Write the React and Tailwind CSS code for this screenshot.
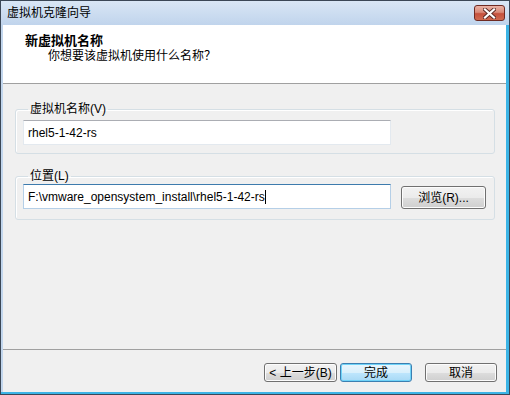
import React from "react";

const font = { fontFamily: '"Liberation Sans", "Noto Sans CJK SC", sans-serif' };

const WinButton = ({ children, primary, className = "" }) => (
  <button
    className={
      "flex items-center justify-center rounded-[3px] border text-[12px] leading-none text-black " +
      (primary
        ? "border-[#3c7fb1] bg-[linear-gradient(#eaf6fd_0%,#d9f0fc_50%,#bee6fd_51%,#a7d9f5_100%)] shadow-[inset_0_0_0_1px_#6fd3f8] "
        : "border-[#707070] bg-[linear-gradient(#f2f2f2_0%,#ebebeb_50%,#dddddd_51%,#cfcfcf_100%)] shadow-[inset_0_0_0_1px_#fcfcfc] ") +
      className
    }
  >
    {children}
  </button>
);

const App = () => {
  return (
    <div
      className="w-[510px] h-[395px] flex flex-col bg-[#c2d6ed] border border-[#3b4756] shadow-[inset_-3px_-2px_0_#3cb4e6]"
      style={font}
    >
      {/* Title bar */}
      <div className="h-[24px] flex items-start justify-between bg-gradient-to-b from-[#d9e6f5] to-[#c0d4ec]">
        <span className="pl-[6px] pt-[4px] text-[12px] leading-[16px] text-black">虚拟机克隆向导</span>
        <div className="mt-[4px] mr-[4px] w-[31px] h-[16px] rounded-[3px] border border-[#6e2a22] bg-[linear-gradient(#eab2a5_0%,#d98a78_45%,#c5503c_55%,#cf6a50_100%)] flex items-center justify-center">
          <svg width="13" height="11" viewBox="0 0 13 11">
            <path d="M2 1.5 L11 9.5 M11 1.5 L2 9.5" stroke="#5a2a25" strokeWidth="4" strokeLinecap="square" />
            <path d="M2 1.5 L11 9.5 M11 1.5 L2 9.5" stroke="#ffffff" strokeWidth="2.2" strokeLinecap="square" />
          </svg>
        </div>
      </div>

      {/* Client area */}
      <div className="flex-1 flex flex-col ml-[2px] mr-[3px] mb-[2px] bg-[#f0f0f0]">
        {/* Header */}
        <div className="h-[59px] bg-white border-b border-[#a0a0a0] pl-[22px] pt-[8px]">
          <div className="text-[13px] leading-[16px] font-bold text-black">新虚拟机名称</div>
          <div className="ml-[23px] text-[12px] leading-[15px] text-black">你想要该虚拟机使用什么名称？</div>
        </div>

        {/* Body */}
        <div className="flex-1 flex flex-col">
          <fieldset className="mt-[18px] ml-[12px] mr-[11px] border border-[#d5dfe5] rounded-[3px] shadow-[inset_1px_1px_0_#ffffff] pl-[7px] pt-[4px] pb-[8px]">
            <legend className="ml-[5px] px-[2px] text-[12px] leading-[14px] text-black">虚拟机名称(V)</legend>
            <div className="w-[368px] h-[25px] bg-white border border-[#e3e9ef] border-t-[#abadb3] flex items-center pl-[4px] text-[12px] text-black">
              rhel5-1-42-rs
            </div>
          </fieldset>

          <fieldset className="mt-[15px] ml-[12px] mr-[11px] border border-[#d5dfe5] rounded-[3px] shadow-[inset_1px_1px_0_#ffffff] pl-[7px] pt-[1px] pb-[10px]">
            <legend className="ml-[5px] px-[2px] text-[12px] leading-[14px] text-black">位置(L)</legend>
            <div className="flex items-start">
              <div className="w-[368px] h-[25px] bg-white border border-[#b5cfe7] border-t-[#3d7bad] flex items-center pl-[4px] text-[12px] text-black">
                <span>F:\vmware_opensystem_install\rhel5-1-42-rs</span>
                <span className="w-[1px] h-[14px] bg-black" />
              </div>
              <WinButton className="ml-[10px] mt-[2px] w-[85px] h-[23px]">浏览(R)...</WinButton>
            </div>
          </fieldset>
        </div>

        {/* Footer */}
        <div className="h-[43px] border-t border-[#a0a0a0] flex justify-end items-start pt-[13px] pr-[9px]">
          <WinButton className="w-[73px] h-[19px]">&lt; 上一步(B)</WinButton>
          <WinButton primary className="ml-[3px] w-[72px] h-[19px]">完成</WinButton>
          <WinButton className="ml-[13px] w-[72px] h-[19px]">取消</WinButton>
        </div>
      </div>
    </div>
  );
};

export default App;
